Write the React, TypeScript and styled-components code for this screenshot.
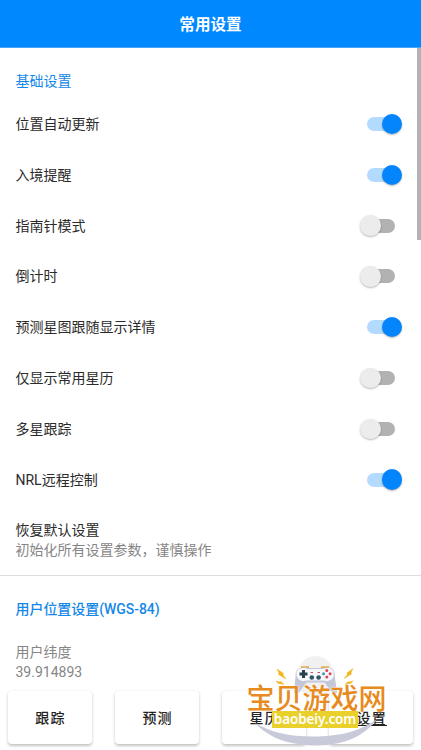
import React, { useState } from 'react';
import styled, { createGlobalStyle } from 'styled-components';

const GlobalStyle = createGlobalStyle`
  * { box-sizing: border-box; }
  body {
    margin: 0;
    overflow: hidden;
    background: #fff;
    font-family: Roboto, "Noto Sans CJK SC", sans-serif;
  }
`;

const Screen = styled.div`
  position: relative;
  display: flex;
  flex-direction: column;
  width: 100%;
  height: 100vh;
  background: #fff;
  overflow: hidden;
`;

const Header = styled.header`
  flex: none;
  display: flex;
  align-items: center;
  justify-content: center;
  height: 48px;
  padding-bottom: 2px;
  border-bottom: 1px solid #47a6ff;
  background: #0088ff;
  color: #fff;
  font-size: 15.6px;
  font-weight: 700;
`;

const List = styled.main`
  position: relative;
  flex: 1;
  min-height: 0;
  overflow: hidden;
`;

const ScrollThumb = styled.div`
  position: absolute;
  right: 0;
  top: 0;
  width: 4px;
  height: 192px;
  background: #b3b3b3;
`;

const SectionTitle = styled.h2<{ $strong?: boolean }>`
  margin: 0;
  padding: 23px 15.5px 0;
  height: 50.6px;
  line-height: 20px;
  font-size: 14px;
  font-weight: ${(p) => (p.$strong ? 500 : 400)};
  letter-spacing: ${(p) => (p.$strong ? '-0.05px' : '0')};
  color: #1488e8;
`;

const Row = styled.div`
  display: flex;
  align-items: center;
  justify-content: space-between;
  height: 50.8px;
  padding: 0 19px 0 15.5px;
  font-size: 14px;
  color: #2b2b2b;
`;

const Label = styled.span`
  padding-bottom: 2px;
`;

const Switch = styled.button<{ $on: boolean }>`
  display: flex;
  align-items: center;
  justify-content: ${(p) => (p.$on ? 'flex-end' : 'flex-start')};
  width: 28px;
  height: 14px;
  margin-right: 7px;
  padding: 0;
  border: 0;
  border-radius: 7px;
  background: ${(p) => (p.$on ? '#b2dbff' : '#b2b2b2')};
`;

const Knob = styled.span<{ $on: boolean }>`
  flex: none;
  width: 20.5px;
  height: 20.5px;
  margin: 0 -7px;
  border-radius: 50%;
  background: ${(p) => (p.$on ? '#0585fb' : '#ececec')};
  box-shadow: 0 1px 2px rgba(0, 0, 0, 0.28);
`;

const Item = styled.div<{ $muted?: boolean }>`
  height: ${(p) => (p.$muted ? '56px' : '70.5px')};
  padding: 15px 15.5px 0;
  font-size: 14px;
  line-height: 20px;
  color: ${(p) => (p.$muted ? '#868686' : '#2b2b2b')};
`;

const Note = styled.div`
  color: #868686;
`;

const Section = styled.section`
  border-top: 1px solid #dedede;
`;

const TabBar = styled.nav`
  flex: none;
  display: grid;
  grid-template-columns: repeat(4, 84px);
  column-gap: 23.1px;
  height: 59px;
  padding-left: 8px;
`;

const Tab = styled.button<{ $active?: boolean }>`
  height: 53px;
  padding: 0 0 2px 1px;
  border: 0;
  border-radius: 4px;
  background: #fff;
  box-shadow: 0 1.5px 3px rgba(0, 0, 0, 0.24);
  color: #222;
  font: 500 14px Roboto, "Noto Sans CJK SC", sans-serif;
  letter-spacing: 1.2px;
  text-decoration: ${(p) => (p.$active ? 'underline' : 'none')};
  text-underline-offset: 2px;
`;

const Badge = styled.div`
  position: absolute;
  left: 240px;
  top: 652px;
  width: 150px;
  height: 96px;
  pointer-events: none;
`;

const Art = styled.svg`
  display: block;
`;

const BrandName = styled.div`
  position: absolute;
  left: 6.5px;
  top: 30px;
  font: 500 28px/30px "Noto Sans CJK SC", sans-serif;
  color: #e78a20;
  white-space: nowrap;
  text-shadow: 0 0 2px #fff, 0 0 1px #fff;
`;

const BrandSite = styled.div`
  position: absolute;
  left: 32px;
  top: 59px;
  width: 86px;
  height: 17px;
  background: #ead02b;
  color: #fff;
  font: 600 13.5px/16px "Noto Sans", sans-serif;
  letter-spacing: -0.1px;
  text-align: center;
`;

const initial = [
  { label: '位置自动更新', on: true },
  { label: '入境提醒', on: true },
  { label: '指南针模式', on: false },
  { label: '倒计时', on: false },
  { label: '预测星图跟随显示详情', on: true },
  { label: '仅显示常用星历', on: false },
  { label: '多星跟踪', on: false },
  { label: 'NRL远程控制', on: true },
];

function BrandBadge() {
  return (
    <Badge>
      <Art width="150" height="96" viewBox="0 0 150 96">
        <ellipse cx="75.5" cy="25" rx="19" ry="21" fill="#eeeeef" opacity=".85" />
        <path d="M15 71C32 81 51 85 77 84.500C103 84 122 78 137 67C125 84 104 93 78 93.500C49 93.500 29 86 15 71Z" fill="#c8cad9" />
        <path d="M61 16V14.200h8V16M81 16v-1.800h8V16" fill="#e5ad43" />
        <path d="M55.500 25C55 17 60 14.500 69 16H82C91 14.500 95.500 17 94.800 25L97 39.500C97 43 92 41 89.500 37L84.500 30.500H66.500L61.500 37C59 42 54 44 54 39.500Z" fill="#c3c7d8" />
        <path d="M56.500 23C56 16.500 62 14.800 68 17H83C89 14.800 94 16.500 93.800 23C93.500 28 88 30 84 28.500H66.500C62 30 57 28 56.500 23Z" fill="#f7f8fc" />
        <path d="M63.500 18v8M59.500 22h8" stroke="#27404c" strokeWidth="3" />
        <circle cx="71.800" cy="25.500" r="2.300" fill="#315765" />
        <circle cx="78.600" cy="25.500" r="2.300" fill="#315765" />
        <path d="M70.500 20.500h2.500M77.500 20.500h2.500" stroke="#d44c63" />
        <circle cx="86.800" cy="18.500" r="1.500" fill="#dd4655" />
        <circle cx="86.800" cy="25.100" r="1.500" fill="#dd4655" />
        <circle cx="83.500" cy="21.800" r="1.500" fill="#3c9bb7" />
        <circle cx="90.100" cy="21.800" r="1.500" fill="#dd4655" />
        <path d="M37 17L43.500 21.500L43 23L46 27L38.500 22.500L39 21ZM36 29L40 30L41 29.500L44 32.500L39.500 31.500L38.500 31.800ZM113 16.500L107 21L107.500 22.500L104 26.500L111.500 22L111 20.500ZM113 29L109 30L108 29.500L105 32.500L109.500 31.500L110.500 31.800Z" fill="#f5b51d" stroke="#f5b51d" strokeWidth=".5" />
      </Art>
      <BrandName>宝贝游戏网</BrandName>
      <BrandSite>baobeiy.com</BrandSite>
    </Badge>
  );
}

export default function App() {
  const [settings, setSettings] = useState(initial);
  const toggle = (index: number) =>
    setSettings((list) => list.map((s, i) => (i === index ? { ...s, on: !s.on } : s)));

  return (
    <>
      <GlobalStyle />
      <Screen>
        <Header>常用设置</Header>
        <List>
          <SectionTitle>基础设置</SectionTitle>
          {settings.map((s, i) => (
            <Row key={s.label}>
              <Label>{s.label}</Label>
              <Switch $on={s.on} aria-label={s.label} onClick={() => toggle(i)}>
                <Knob $on={s.on} />
              </Switch>
            </Row>
          ))}
          <Item>
            恢复默认设置
            <Note>初始化所有设置参数，谨慎操作</Note>
          </Item>
          <Section>
            <SectionTitle $strong>用户位置设置(WGS-84)</SectionTitle>
            <Item $muted>
              用户纬度
              <Note>39.914893</Note>
            </Item>
          </Section>
          <ScrollThumb />
        </List>
        <TabBar>
          <Tab>跟踪</Tab>
          <Tab>预测</Tab>
          <Tab>星历</Tab>
          <Tab $active>设置</Tab>
        </TabBar>
        <BrandBadge />
      </Screen>
    </>
  );
}
